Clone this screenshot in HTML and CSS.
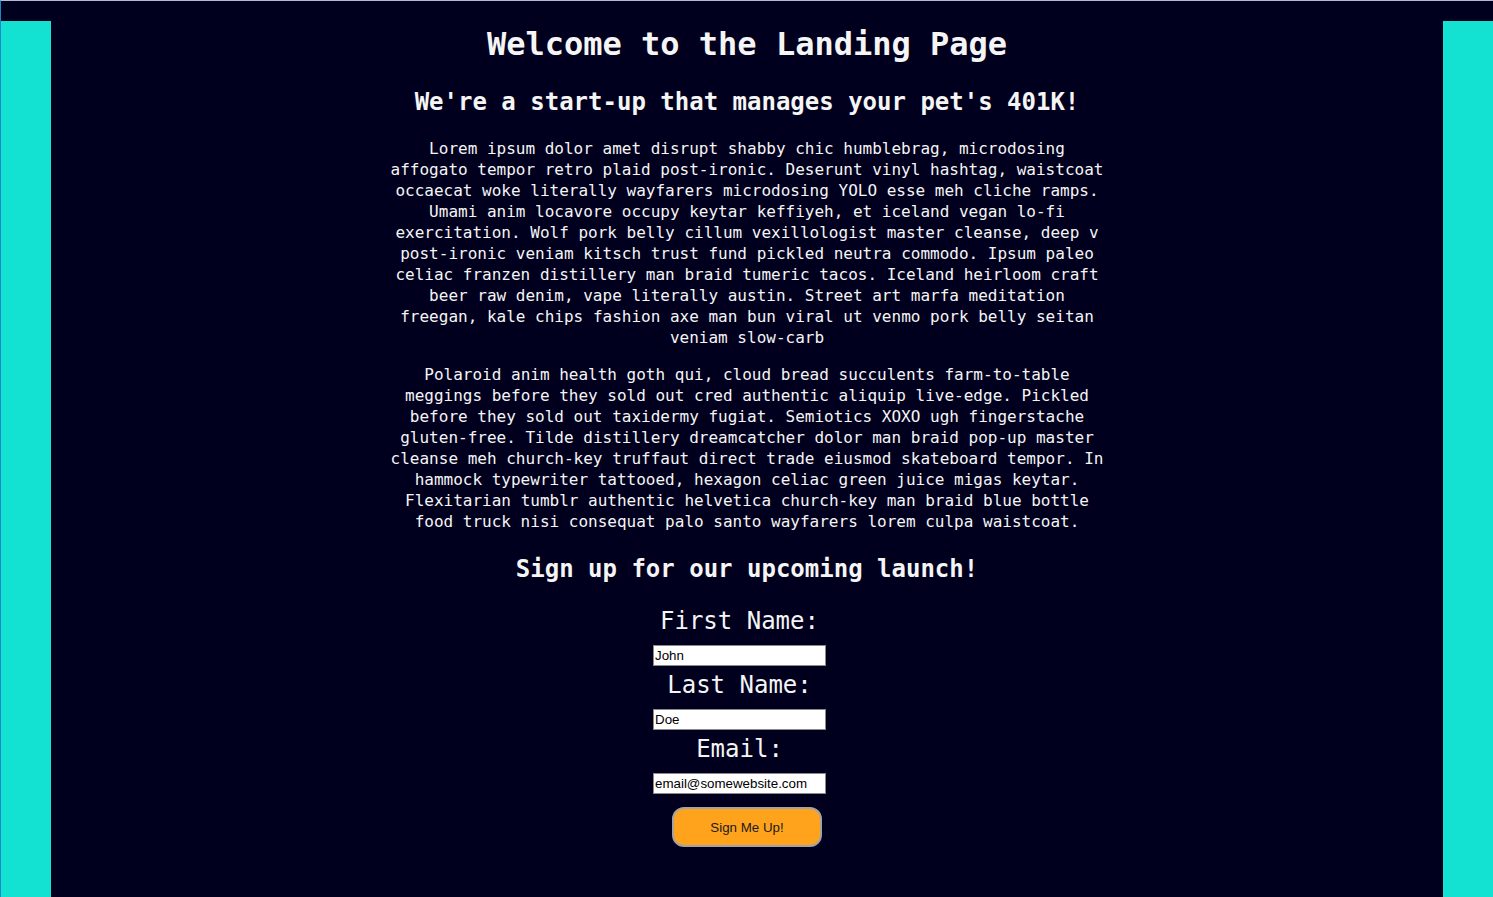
FILE: index.html
```html
<!DOCTYPE html>
<html lang="en">
<head>
<meta charset="utf-8">
<title>Landing Page</title>
<link rel="stylesheet" href="styles.css">
</head>
<body>
<div class="container">
  <h1 class="title">Welcome to the Landing Page</h1>
  <h2 class="subtitle">We're a start-up that manages your pet's 401K!</h2>
  <p class="copy">Lorem ipsum dolor amet disrupt shabby chic humblebrag, microdosing affogato tempor retro plaid post-ironic. Deserunt vinyl hashtag, waistcoat occaecat woke literally wayfarers microdosing YOLO esse meh cliche ramps. Umami anim locavore occupy keytar keffiyeh, et iceland vegan lo-fi exercitation. Wolf pork belly cillum vexillologist master cleanse, deep v post-ironic veniam kitsch trust fund pickled neutra commodo. Ipsum paleo celiac franzen distillery man braid tumeric tacos. Iceland heirloom craft beer raw denim, vape literally austin. Street art marfa meditation freegan, kale chips fashion axe man bun viral ut venmo pork belly seitan veniam slow-carb</p>
  <p class="copy copy-second">Polaroid anim health goth qui, cloud bread succulents farm-to-table meggings before they sold out cred authentic aliquip live-edge. Pickled before they sold out taxidermy fugiat. Semiotics XOXO ugh fingerstache gluten-free. Tilde distillery dreamcatcher dolor man braid pop-up master cleanse meh church-key truffaut direct trade eiusmod skateboard tempor. In hammock typewriter tattooed, hexagon celiac green juice migas keytar. Flexitarian tumblr authentic helvetica church-key man braid blue bottle food truck nisi consequat palo santo wayfarers lorem culpa waistcoat.</p>
  <h3 class="signup-title">Sign up for our upcoming launch!</h3>
  <form class="signup">
    <div class="fields">
      <label class="field-label" for="first">First Name:</label>
      <input class="field-input" id="first" type="text" value="John">
      <label class="field-label" for="last">Last Name:</label>
      <input class="field-input" id="last" type="text" value="Doe">
      <label class="field-label" for="email">Email:</label>
      <input class="field-input" id="email" type="text" value="email@somewebsite.com">
    </div>
    <button class="submit" type="button">Sign Me Up!</button>
  </form>
</div>
</body>
</html>
```

FILE: styles.css
```css
html, body {
  margin: 0;
  padding: 0;
}

body {
  min-height: 896px;
  border-top: 1px solid #b2bacf;
  border-left: 1px solid #1b86c8;
  background: linear-gradient(to bottom, #00001e 21px, #13e2d2 21px);
  font-family: "DejaVu Sans Mono", "Liberation Mono", monospace;
  color: #f5f5f5;
}

.container {
  margin: 0 50px;
  min-height: 896px;
  background: #00001e;
  text-align: center;
  overflow: hidden;
}

.title {
  margin: 23px 0 0;
  font-size: 32px;
  line-height: 40px;
  font-weight: bold;
}

.subtitle {
  margin: 23px 0 0;
  font-size: 24px;
  line-height: 30px;
  font-weight: bold;
}

.copy {
  width: 720px;
  margin: 21px auto 0;
  font-size: 16px;
  line-height: 21px;
}

.copy-second {
  margin-top: 16px;
}

.signup-title {
  margin: 22px 0 0;
  font-size: 24px;
  line-height: 30px;
  font-weight: bold;
}

.signup {
  display: flex;
  flex-direction: column;
  align-items: center;
  margin-top: 23px;
}

.fields {
  display: flex;
  flex-direction: column;
  align-items: center;
  margin-right: 15px;
}

.field-label {
  font-size: 24px;
  line-height: 29px;
}

.field-input {
  box-sizing: border-box;
  width: 173px;
  height: 21px;
  margin: 9px 0 5px;
  padding: 1px 1px;
  border: 1px solid #8a8a8a;
  background: #ffffff;
  color: #000000;
  font-family: "Liberation Sans", Arial, sans-serif;
  font-size: 13.33px;
}

.submit {
  box-sizing: border-box;
  width: 150px;
  height: 40px;
  margin-top: 8px;
  border: 2px solid #a3a3a3;
  border-radius: 12px;
  background: #ffa31c;
  color: #1a1a1a;
  font-family: "Liberation Sans", Arial, sans-serif;
  font-size: 13.33px;
}
```
